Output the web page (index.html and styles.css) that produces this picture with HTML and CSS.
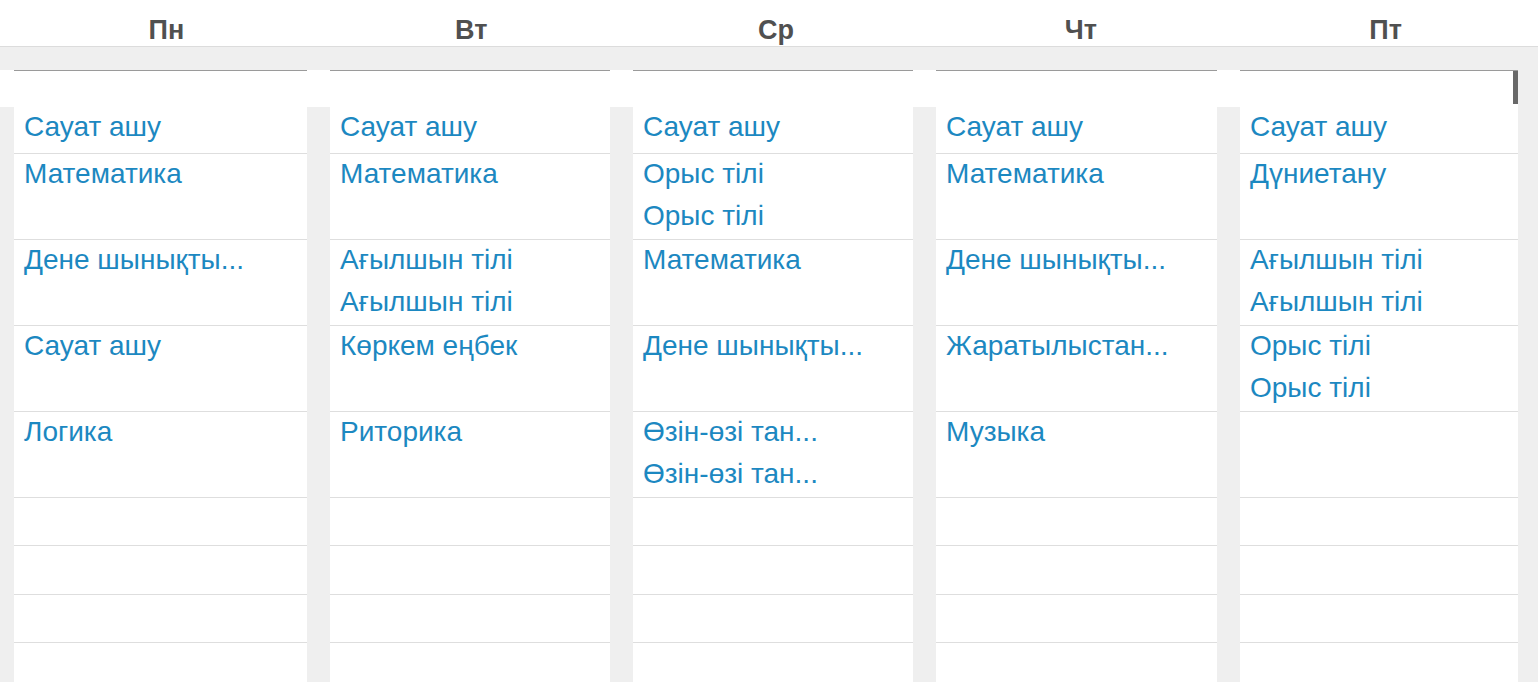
FILE: index.html
```html
<!DOCTYPE html>
<html lang="kk">
<head>
<meta charset="utf-8">
<title>Кесте</title>
<link rel="stylesheet" href="styles.css">
</head>
<body>
<div class="page">
  <div class="days">
    <div class="day">Пн</div>
    <div class="day">Вт</div>
    <div class="day">Ср</div>
    <div class="day">Чт</div>
    <div class="day">Пт</div>
  </div>
  <div class="band"></div>
  <div class="viewport">
    <div class="main">
      <div class="tops">
        <div class="top"></div>
        <div class="top"></div>
        <div class="top"></div>
        <div class="top"></div>
        <div class="top"></div>
      </div>
      <div class="thumb"></div>
      <div class="grid">
        <!-- Пн -->
        <div class="cell"><div class="item">Сауат ашу</div></div>
        <div class="cell"><div class="item">Математика</div></div>
        <div class="cell"><div class="item">Дене шынықты...</div></div>
        <div class="cell"><div class="item">Сауат ашу</div></div>
        <div class="cell"><div class="item">Логика</div></div>
        <div class="cell"></div>
        <div class="cell"></div>
        <div class="cell"></div>
        <div class="cell"></div>
        <!-- Вт -->
        <div class="cell"><div class="item">Сауат ашу</div></div>
        <div class="cell"><div class="item">Математика</div></div>
        <div class="cell"><div class="item">Ағылшын тілі</div><div class="item">Ағылшын тілі</div></div>
        <div class="cell"><div class="item">Көркем еңбек</div></div>
        <div class="cell"><div class="item">Риторика</div></div>
        <div class="cell"></div>
        <div class="cell"></div>
        <div class="cell"></div>
        <div class="cell"></div>
        <!-- Ср -->
        <div class="cell"><div class="item">Сауат ашу</div></div>
        <div class="cell"><div class="item">Орыс тілі</div><div class="item">Орыс тілі</div></div>
        <div class="cell"><div class="item">Математика</div></div>
        <div class="cell"><div class="item">Дене шынықты...</div></div>
        <div class="cell"><div class="item">Өзін-өзі тан...</div><div class="item">Өзін-өзі тан...</div></div>
        <div class="cell"></div>
        <div class="cell"></div>
        <div class="cell"></div>
        <div class="cell"></div>
        <!-- Чт -->
        <div class="cell"><div class="item">Сауат ашу</div></div>
        <div class="cell"><div class="item">Математика</div></div>
        <div class="cell"><div class="item">Дене шынықты...</div></div>
        <div class="cell"><div class="item">Жаратылыстан...</div></div>
        <div class="cell"><div class="item">Музыка</div></div>
        <div class="cell"></div>
        <div class="cell"></div>
        <div class="cell"></div>
        <div class="cell"></div>
        <!-- Пт -->
        <div class="cell"><div class="item">Сауат ашу</div></div>
        <div class="cell"><div class="item">Дүниетану</div></div>
        <div class="cell"><div class="item">Ағылшын тілі</div><div class="item">Ағылшын тілі</div></div>
        <div class="cell"><div class="item">Орыс тілі</div><div class="item">Орыс тілі</div></div>
        <div class="cell"></div>
        <div class="cell"></div>
        <div class="cell"></div>
        <div class="cell"></div>
        <div class="cell"></div>
      </div>
    </div>
    <div class="side"></div>
  </div>
</div>
</body>
</html>
```
FILE: styles.css
```css
html, body {
  margin: 0;
  padding: 0;
  background: #efefef;
  overflow: hidden;
}
body {
  font-family: "Liberation Sans", Arial, sans-serif;
  width: 1538px;
  height: 682px;
}
.days {
  box-sizing: border-box;
  height: 47px;
  padding: 15px 0 0 14px;
  background: #fff;
  border-bottom: 1px solid #dcdcdc;
  display: grid;
  grid-template-columns: repeat(5, 1fr);
}
.day {
  text-align: center;
  font-weight: bold;
  font-size: 27px;
  line-height: 30px;
  color: #505050;
}
.band {
  height: 23px;
  background: #efefef;
}
.viewport {
  display: flex;
}
.main {
  position: relative;
  width: 1518px;
  background: #fff;
}
.side {
  flex: 1;
  background: #efefef;
}
.tops,
.grid {
  display: grid;
  grid-template-columns: 293px 280px 280px 281px 278px;
  column-gap: 23px;
  padding-left: 14px;
}
.tops {
  height: 37px;
  background: #fff;
}
.top {
  border-top: 1px solid #9a9a9a;
}
.thumb {
  position: absolute;
  left: 1513px;
  top: 1px;
  width: 5px;
  height: 33px;
  background: #686868;
}
.grid {
  background: #efefef;
  grid-auto-flow: column;
  grid-template-rows: 47px 86px 86px 86px 86px 48px 49px 48px 48px;
}
.cell {
  box-sizing: border-box;
  background: #fff;
  border-bottom: 1px solid #dedede;
  padding-left: 10px;
  overflow: hidden;
}
.item {
  font-size: 28px;
  line-height: 36px;
  padding: 2px 0 4px;
  color: #1c88c1;
  white-space: nowrap;
}
```
